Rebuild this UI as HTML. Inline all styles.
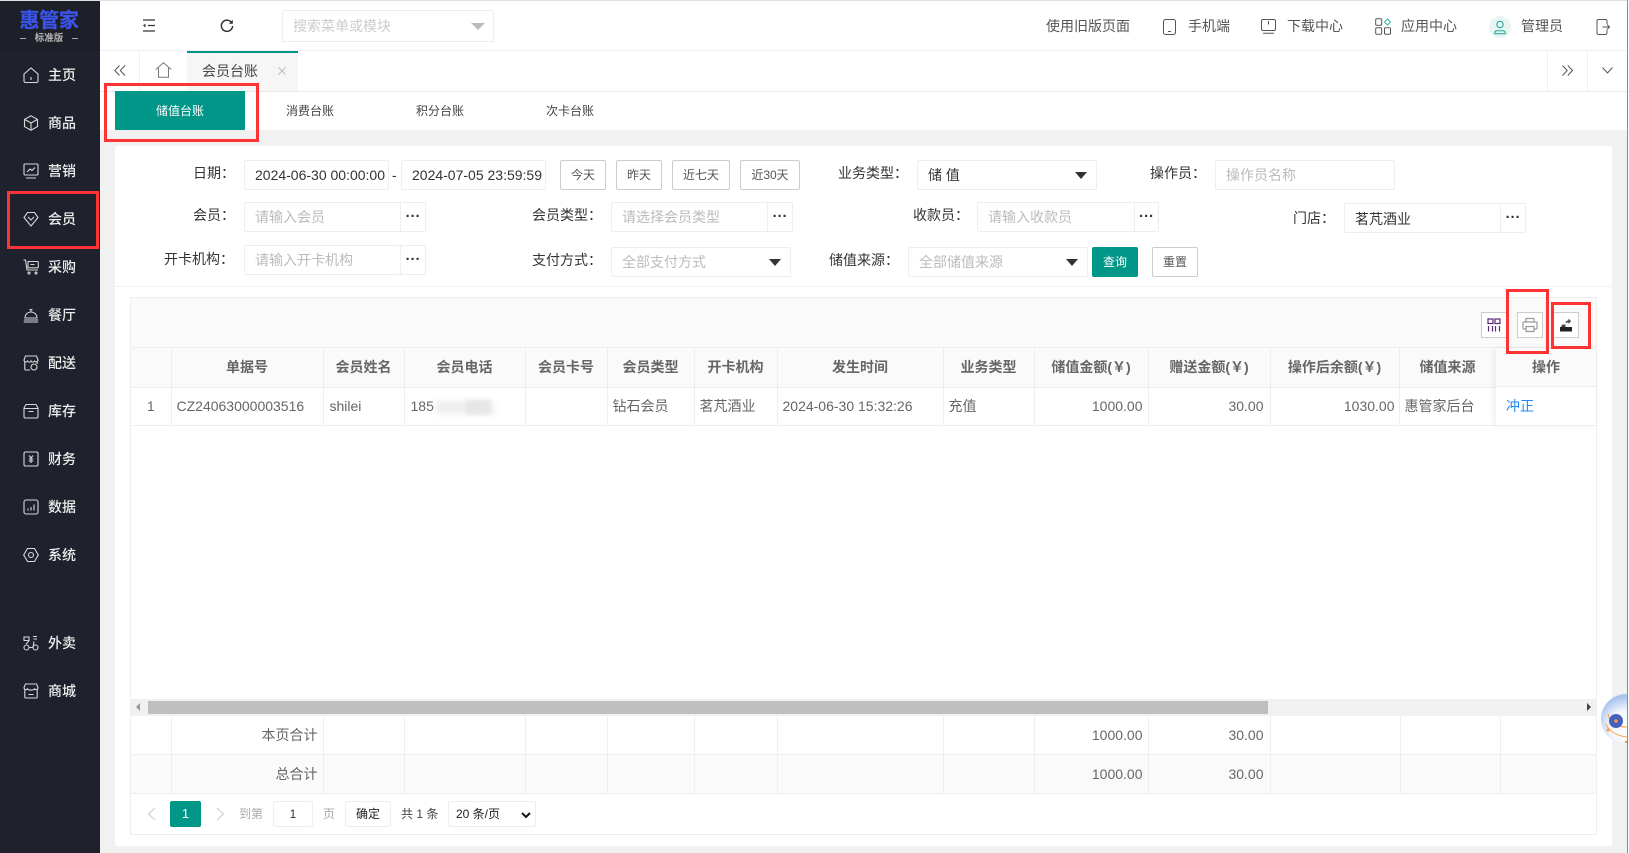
<!DOCTYPE html>
<html lang="zh-CN"><head><meta charset="utf-8"><title>会员台账</title>
<style>
*{box-sizing:border-box}
html,body{margin:0;padding:0;width:1629px;height:853px;overflow:hidden;background:#f1f1f1;font-family:"Liberation Sans","Noto Sans CJK SC",sans-serif;font-size:14px;color:#333}
.a{position:absolute}
.t{position:absolute;white-space:nowrap;line-height:30px;height:30px}
.box{position:absolute;background:#fff;border:1px solid #eee;border-radius:2px;height:30px;line-height:28px;padding-left:10px;white-space:nowrap;overflow:hidden}
.ph{color:#bbb}
.dots{position:absolute;background:#fff;border:1px solid #eee;width:26px;height:30px;text-align:center;font-size:15px;line-height:28px;font-weight:bold;color:#333;letter-spacing:0}
.btn{position:absolute;top:160px;height:30px;border:1px solid #ccc;border-radius:2px;background:#fff;text-align:center;line-height:29px;font-size:12px;color:#555}
.car{position:absolute;width:0;height:0;border-left:6px solid transparent;border-right:6px solid transparent;border-top:7px solid #333}
.lb{text-align:right}
.side{position:absolute;left:0;top:1px;width:100px;height:852px;background:#1f222c}
.m{position:absolute;left:48px;color:#ededed;font-size:14px;font-weight:500;line-height:20px;white-space:nowrap}
.i{position:absolute;left:23px;width:16px;height:16px;fill:none;stroke:#d8d8d8;stroke-width:1.1}
.hd{position:absolute;top:16px;line-height:20px;color:#555;white-space:nowrap}
.tab{position:absolute;top:91px;height:39px;line-height:41px;font-size:12px;color:#444;width:130px;text-align:center}
table{border-collapse:collapse;table-layout:fixed;position:absolute;left:131px}
td,th{border-right:1px solid #eee;border-bottom:1px solid #eee;padding:0 5px;white-space:nowrap;overflow:hidden;font-size:14px;color:#666}
th{background:#fafafa;font-weight:bold;height:39px;text-align:center}
td{height:38.5px}
.r{text-align:right}
.rb{position:absolute;border:3px solid #f33;background:transparent;z-index:20}
.tb{position:absolute;top:312px;width:26px;height:26px;border:1px solid #ccc;background:#fff}
.tb svg{position:absolute;left:4px;top:4px;width:16px;height:16px}
</style></head><body>
<div class="a" style="left:0;top:0;width:1629px;height:1px;background:#e0e0e0"></div>

<!-- sidebar -->
<div class="side"></div>
<div class="a" style="left:0;top:1px;width:100px;height:50px;background:#1e2029"></div>
<div class="t" style="left:19px;top:6px;width:60px;text-align:center;font-size:20px;font-weight:bold;color:#3b54e8;line-height:30px;letter-spacing:-.3px;-webkit-text-stroke:.3px #3b54e8">惠管家</div>
<div class="t" style="left:20px;top:24px;width:58px;text-align:center;font-size:9.5px;font-weight:bold;color:#b5b5b5;line-height:30px">标准版</div>
<div class="a" style="left:20px;top:38px;width:6px;height:1px;background:#aaa"></div>
<div class="a" style="left:72px;top:38px;width:6px;height:1px;background:#aaa"></div>

<svg class="i" style="top:67px" viewBox="0 0 16 16"><path d="M1 7L8 1l7 6v7a1.500 1.500 0 0 1-1.500 1.500h-11A1.500 1.500 0 0 1 1 14zM8 10v3"/></svg><div class="m" style="top:65px">主页</div>
<svg class="i" style="top:115px" viewBox="0 0 16 16"><path d="M8 .8l6.500 3.600v7.200L8 15.200l-6.500-3.600V4.400zM1.500 4.400L8 8l6.500-3.600M8 8v7"/></svg><div class="m" style="top:113px">商品</div>
<svg class="i" style="top:163px" viewBox="0 0 16 16"><path d="M2 1h12a1 1 0 0 1 1 1v9a1 1 0 0 1-1 1H2a1 1 0 0 1-1-1V2a1 1 0 0 1 1-1zM3 15h10M4 9l3-3 2 1.500L12 4.500"/></svg><div class="m" style="top:161px">营销</div>
<svg class="i" style="top:211px" viewBox="0 0 16 16"><path d="M4.500 1.500h7L15 6.500 8 15 1 6.500zM5 6l3 3 3-3"/></svg><div class="m" style="top:209px">会员</div>
<svg class="i" style="top:259px" viewBox="0 0 16 16"><path d="M.5 1h2l1.500 10h11M5 2.500h9.500a.8.8 0 0 1 .8.8V8a.8.8 0 0 1-.8.8H5zM7.500 5.500h4"/><circle cx="6" cy="14" r="1"/><circle cx="13" cy="14" r="1"/></svg><div class="m" style="top:257px">采购</div>
<svg class="i" style="top:307px" viewBox="0 0 16 16"><path d="M2 11a6 6 0 0 1 12 0zM8 5V3M6.500 2.500h3M.8 13h14.400M.8 15h14.400"/></svg><div class="m" style="top:305px">餐厅</div>
<svg class="i" style="top:355px" viewBox="0 0 16 16"><path d="M2.500 1h11L15 5c0 2-2.500 2.500-3.500 1-1 1.500-3 1.500-3.500 0-.5 1.500-2.500 1.500-3.500 0C3.500 7.500 1 7 1 5zM1.800 6.500V14a1 1 0 0 0 1 1H7M14.200 6.500V9"/><circle cx="11" cy="12" r="3"/></svg><div class="m" style="top:353px">配送</div>
<svg class="i" style="top:403px" viewBox="0 0 16 16"><path d="M3 1.500h10L15 5v8.500a1.500 1.500 0 0 1-1.500 1.500h-11A1.500 1.500 0 0 1 1 13.500V5zM1 5.500h14M5.500 8.500h5"/></svg><div class="m" style="top:401px">库存</div>
<svg class="i" style="top:451px" viewBox="0 0 16 16"><rect x="1" y="1" width="14" height="14" rx="1.500"/><path d="M6 4.500l2 2.500 2-2.500M8 7v5M5.800 8h4.400M5.800 10h4.400"/></svg><div class="m" style="top:449px">财务</div>
<svg class="i" style="top:499px" viewBox="0 0 16 16"><rect x="1" y="1" width="14" height="14" rx="2"/><path d="M5 11.500v-2M8 11.500v-3.500M11 11.500V5.500"/></svg><div class="m" style="top:497px">数据</div>
<svg class="i" style="top:547px" viewBox="0 0 16 16"><path d="M4.500 1.500h7L15.300 8l-3.800 6.500h-7L.7 8z"/><circle cx="8" cy="8" r="2.500"/></svg><div class="m" style="top:545px">系统</div>
<svg class="i" style="top:635px" viewBox="0 0 16 16"><circle cx="3.500" cy="12.500" r="2.500"/><circle cx="12.500" cy="12.500" r="2.500"/><path d="M1 2h5v3.500H1zM10 1.500h4M10.500 4h3.500M6 12.500h4l1-6M3 9l3-3"/></svg><div class="m" style="top:633px">外卖</div>
<svg class="i" style="top:683px" viewBox="0 0 16 16"><path d="M2.500 1h11L15 4.500c0 2-2.500 3-3.500 1.300-1 1.700-6 1.700-7 0C3.500 7.500 1 6.500 1 4.500zM1.800 6.500V14a1 1 0 0 0 1 1h10.400a1 1 0 0 0 1-1V6.500M5.500 11.500h5"/></svg><div class="m" style="top:681px">商城</div>
<div class="rb" style="left:7px;top:191px;width:92px;height:58px"></div>

<!-- header -->
<div class="a" style="left:100px;top:1px;width:1529px;height:50px;background:#fff;border-bottom:1px solid #f0f0f0"></div>
<svg class="a" style="left:142px;top:19px" width="14" height="13" fill="none" stroke="#333" stroke-width="1.300" viewBox="0 0 14 13"><path d="M1 1h12M6 6.500h7M1 12h12"/><path d="M3.500 4.500L1 6.500l2.500 2z" fill="#333" stroke="none"/></svg>
<svg class="a" style="left:220px;top:19px" width="14" height="14" fill="none" stroke="#333" stroke-width="1.500" viewBox="0 0 14 14"><path d="M12 4.200A5.600 5.600 0 1 0 12.600 7"/><path d="M12.800 .8v4h-4" stroke="none" fill="#333"/></svg>
<div class="box" style="left:282px;top:10px;width:212px;height:32px;color:#ccc;line-height:30px">搜索菜单或模块</div>
<div class="car" style="left:471px;top:23px;border-top-color:#bbb;border-left-width:7px;border-right-width:7px"></div>

<div class="hd" style="left:1046px">使用旧版页面</div>
<svg class="a" style="left:1163px;top:19px" width="13" height="16" fill="none" stroke="#555" viewBox="0 0 13 16"><rect x=".5" y=".5" width="12" height="15" rx="2"/><path d="M5 12.500h3"/></svg>
<div class="hd" style="left:1188px">手机端</div>
<svg class="a" style="left:1261px;top:19px" width="15" height="15" fill="none" stroke="#555" viewBox="0 0 15 15"><rect x=".5" y=".5" width="14" height="11" rx="1.500"/><path d="M2 14.300h11M7.500 2v3.500"/></svg>
<div class="hd" style="left:1287px">下载中心</div>
<svg class="a" style="left:1375px;top:18px" width="16" height="17" fill="none" stroke="#555" viewBox="0 0 16 17"><rect x=".7" y=".7" width="6" height="6.500" rx="1"/><rect x=".7" y="9.700" width="6" height="6.500" rx="1"/><rect x="9.500" y="9.700" width="6" height="6.500" rx="1"/><path d="M12.500 .8l3 3.200-3 3.200-3-3.200z" stroke="#35b5a5"/></svg>
<div class="hd" style="left:1401px">应用中心</div>
<div class="a" style="left:1489px;top:16px;width:22px;height:22px;border-radius:50%;background:#e8f5f3"></div>
<svg class="a" style="left:1494px;top:20px" width="12" height="15" fill="none" stroke="#12a594" viewBox="0 0 12 15"><circle cx="6" cy="4.500" r="3.200"/><path d="M.8 13.800v-1a2 2 0 0 1 2-2h6.400a2 2 0 0 1 2 2v1z"/></svg>
<div class="hd" style="left:1521px">管理员</div>
<svg class="a" style="left:1596px;top:19px" width="14" height="16" fill="none" stroke="#555" viewBox="0 0 14 16"><path d="M11 5V2a1.500 1.500 0 0 0-1.500-1.500h-7A1.500 1.500 0 0 0 1 2v12a1.500 1.500 0 0 0 1.500 1.500h7A1.500 1.500 0 0 0 11 14v-3M6.500 8h7M11 5.500L13.500 8 11 10.500"/></svg>

<!-- tab bar -->
<div class="a" style="left:100px;top:51px;width:1529px;height:41px;background:#fff;border-bottom:1px solid #e9e9e9"></div>
<div class="a" style="left:139px;top:51px;width:1px;height:40px;background:#f0f0f0"></div>
<svg class="a" style="left:114px;top:65px" width="12" height="11" fill="none" stroke="#555" viewBox="0 0 12 11"><path d="M5.500 .5L.8 5.500l4.700 5M11 .5L6.300 5.500l4.700 5"/></svg>
<svg class="a" style="left:155px;top:62px" width="17" height="16" fill="none" stroke="#777" viewBox="0 0 17 16"><path d="M.7 7.500L8.500.8l7.800 6.700M3.500 6v9.300h10V6"/></svg>
<div class="a" style="left:187px;top:51px;width:111px;height:40px;background:#f6f6f6;border-top:2px solid #009688"></div>
<div class="t" style="left:202px;top:56px;font-size:14px;color:#444">会员台账</div>
<svg class="a" style="left:278px;top:67px" width="8" height="8" stroke="#bbb" viewBox="0 0 8 8"><path d="M.5 .5l7 7M7.500 .5l-7 7"/></svg>
<div class="a" style="left:1547px;top:51px;width:1px;height:40px;background:#f0f0f0"></div>
<div class="a" style="left:1587px;top:51px;width:1px;height:40px;background:#f0f0f0"></div>
<svg class="a" style="left:1562px;top:65px" width="11" height="11" fill="none" stroke="#555" viewBox="0 0 11 11"><path d="M.5 .5l4.700 5-4.700 5M5.800 .5l4.700 5-4.700 5"/></svg>
<svg class="a" style="left:1602px;top:67px" width="11" height="7" fill="none" stroke="#555" viewBox="0 0 11 7"><path d="M.5 .5l5 5.500 5-5.500"/></svg>

<!-- sub tabs -->
<div class="a" style="left:100px;top:92px;width:1529px;height:38px;background:#fff"></div>
<div class="tab" style="left:115px;background:#009688;color:#fff">储值台账</div>
<div class="tab" style="left:245px">消费台账</div>
<div class="tab" style="left:375px">积分台账</div>
<div class="tab" style="left:505px">次卡台账</div>
<div class="rb" style="left:104px;top:83px;width:155px;height:59px"></div>

<!-- card -->
<div class="a" style="left:115px;top:146px;width:1497px;height:700px;background:#fff;border-radius:2px"></div>
<div class="a" style="left:115px;top:286px;width:1497px;height:1px;background:#f2f2f2"></div>

<!-- filters row 1 -->
<div class="t lb" style="left:160px;top:158px;width:75px">日期：</div>
<div class="box" style="left:244px;top:160px;width:145px;color:#333">2024-06-30 00:00:00</div>
<div class="t" style="left:392px;top:160px">-</div>
<div class="box" style="left:401px;top:160px;width:145px;color:#333">2024-07-05 23:59:59</div>
<div class="btn" style="left:560px;width:46px">今天</div>
<div class="btn" style="left:616px;width:46px">昨天</div>
<div class="btn" style="left:672px;width:58px">近七天</div>
<div class="btn" style="left:740px;width:60px">近30天</div>
<div class="t lb" style="left:820px;top:158px;width:88px">业务类型：</div>
<div class="box" style="left:917px;top:160px;width:180px;color:#333">储 值</div>
<div class="car" style="left:1075px;top:172px"></div>
<div class="t lb" style="left:1130px;top:158px;width:76px">操作员：</div>
<div class="box ph" style="left:1215px;top:160px;width:180px">操作员名称</div>

<!-- row 2 -->
<div class="t lb" style="left:160px;top:200px;width:75px">会员：</div>
<div class="box ph" style="left:244px;top:202px;width:157px">请输入会员</div>
<div class="dots" style="left:400px;top:202px">···</div>
<div class="t lb" style="left:500px;top:200px;width:102px">会员类型：</div>
<div class="box ph" style="left:611px;top:202px;width:157px">请选择会员类型</div>
<div class="dots" style="left:767px;top:202px">···</div>
<div class="t lb" style="left:880px;top:200px;width:89px">收款员：</div>
<div class="box ph" style="left:977px;top:202px;width:158px">请输入收款员</div>
<div class="dots" style="left:1134px;top:202px;width:25px">···</div>
<div class="t lb" style="left:1260px;top:203px;width:75px">门店：</div>
<div class="box" style="left:1344px;top:203px;width:157px;height:30px;line-height:30px;color:#333">茗芃酒业</div>
<div class="dots" style="left:1500px;top:203px;width:26px">···</div>

<!-- row 3 -->
<div class="t lb" style="left:140px;top:244px;width:94px">开卡机构：</div>
<div class="box ph" style="left:244px;top:245px;width:157px">请输入开卡机构</div>
<div class="dots" style="left:400px;top:245px">···</div>
<div class="t lb" style="left:500px;top:245px;width:102px">支付方式：</div>
<div class="box ph" style="left:611px;top:247px;width:180px">全部支付方式</div>
<div class="car" style="left:769px;top:259px"></div>
<div class="t lb" style="left:800px;top:245px;width:99px">储值来源：</div>
<div class="box ph" style="left:908px;top:247px;width:180px">全部储值来源</div>
<div class="car" style="left:1066px;top:259px"></div>
<div class="btn" style="left:1092px;top:247px;width:46px;background:#009688;border-color:#009688;color:#fff">查询</div>
<div class="btn" style="left:1152px;top:247px;width:46px">重置</div>

<!-- table card -->
<div class="a" style="left:130px;top:297px;width:1467px;height:538px;background:#fff;border:1px solid #eee"></div>
<div class="a" style="left:131px;top:298px;width:1465px;height:50px;background:#fafafa;border-bottom:1px solid #eee"></div>
<div class="tb" style="left:1481px"><svg viewBox="0 0 16 16" fill="none" stroke="#5a2a7a" stroke-width="1.200"><path d="M2 2h5v4.500H2zM9 2h5v4.500H9zM2.500 9v5.500M6.500 9v5.500M9.500 9v5.500M13.500 9v5.500"/></svg></div>
<div class="tb" style="left:1517px"><svg viewBox="0 0 16 16" fill="none" stroke="#999" stroke-width="1.200"><path d="M4 5V1.500h8V5M4 12H2a1 1 0 0 1-1-1V6a1 1 0 0 1 1-1h12a1 1 0 0 1 1 1v5a1 1 0 0 1-1 1h-2M4 9.500h8v5H4z"/></svg></div>
<div class="tb" style="left:1553px"><svg viewBox="0 0 16 16"><path d="M2 10h12v4.500H2z" fill="#222"/><path d="M3 10l1.300-2.500h3.200V10z" fill="#444"/><path d="M7.500 6.500c0-2 1-3 3-3V1.500L13 4.300 10.500 7V5.200C9 5.200 8.300 5.600 7.500 6.500z" fill="#444"/></svg></div>
<div class="rb" style="left:1506px;top:289px;width:43px;height:65px"></div>
<div class="rb" style="left:1551px;top:302px;width:40px;height:47px"></div>

<table style="top:348px;width:1465px">
<colgroup><col style="width:40px"><col style="width:152px"><col style="width:81px"><col style="width:121px"><col style="width:82px"><col style="width:87px"><col style="width:83px"><col style="width:166px"><col style="width:91px"><col style="width:114px"><col style="width:122px"><col style="width:129px"><col style="width:97px"><col style="width:100px"></colgroup>
<tr><th></th><th>单据号</th><th>会员姓名</th><th>会员电话</th><th>会员卡号</th><th>会员类型</th><th>开卡机构</th><th>发生时间</th><th>业务类型</th><th>储值金额(￥)</th><th>赠送金额(￥)</th><th>操作后余额(￥)</th><th>储值来源</th><th></th></tr>
<tr><td style="text-align:center;padding:0 5px 0 5px">1</td><td>CZ24063000003516</td><td style="padding-left:6px">shilei</td><td style="padding-left:6px">185</td><td></td><td style="padding-left:5px">钻石会员</td><td>茗芃酒业</td><td>2024-06-30 15:32:26</td><td style="padding-left:5px">充值</td><td class="r">1000.00</td><td class="r" style="padding-right:6px">30.00</td><td class="r" style="padding-right:4px">1030.00</td><td style="padding-left:5px">惠管家后台</td><td></td></tr>
</table>
<div class="a" style="left:436px;top:401px;width:58px;height:13px;background:#eee;filter:blur(3px)"></div>
<div class="a" style="left:466px;top:400px;width:24px;height:14px;background:#e6e6e6;filter:blur(2px)"></div>

<!-- fixed op column -->
<div class="a" style="left:1496px;top:348px;width:100px;height:78px;background:#fff;box-shadow:-3px 0 6px rgba(0,0,0,.06)">
<div style="height:39px;background:#fafafa;border-bottom:1px solid #eee;text-align:center;font-weight:bold;color:#666;line-height:38px">操作</div>
<div style="height:39px;border-bottom:1px solid #eee;padding-left:10px;line-height:38px;color:#1e88f5">冲正</div>
</div>

<!-- scrollbar -->
<div class="a" style="left:131px;top:699px;width:1465px;height:17px;background:#f1f1f1"></div>
<div class="a" style="left:148px;top:701px;width:1120px;height:13px;background:#bfbfbf"></div>
<div class="a" style="left:136px;top:703px;width:0;height:0;border-top:4px solid transparent;border-bottom:4px solid transparent;border-right:4px solid #999"></div>
<div class="a" style="left:1587px;top:703px;width:0;height:0;border-top:4px solid transparent;border-bottom:4px solid transparent;border-left:4px solid #444"></div>

<!-- totals -->
<table style="top:716px;width:1465px">
<colgroup><col style="width:40px"><col style="width:152px"><col style="width:81px"><col style="width:121px"><col style="width:82px"><col style="width:87px"><col style="width:83px"><col style="width:166px"><col style="width:91px"><col style="width:114px"><col style="width:122px"><col style="width:130px"><col style="width:100px"><col style="width:96px"></colgroup>
<tr><td></td><td class="r">本页合计</td><td></td><td></td><td></td><td></td><td></td><td></td><td></td><td class="r">1000.00</td><td class="r" style="padding-right:6px">30.00</td><td></td><td></td><td style="border-right:0"></td></tr>
<tr style="background:#fafafa"><td></td><td class="r">总合计</td><td></td><td></td><td></td><td></td><td></td><td></td><td></td><td class="r">1000.00</td><td class="r" style="padding-right:6px">30.00</td><td></td><td></td><td style="border-right:0"></td></tr>
</table>

<!-- pager -->
<svg class="a" style="left:147px;top:807px" width="9" height="14" fill="none" stroke="#d5d5d5" stroke-width="1.300" viewBox="0 0 9 14"><path d="M8 1L1.500 7 8 13"/></svg>
<div class="a" style="left:170px;top:801px;width:31px;height:26px;background:#009688;border-radius:2px;color:#fff;text-align:center;line-height:26px;font-size:13px">1</div>
<svg class="a" style="left:216px;top:807px" width="9" height="14" fill="none" stroke="#d5d5d5" stroke-width="1.300" viewBox="0 0 9 14"><path d="M1 1l6.500 6L1 13"/></svg>
<div class="t" style="left:239px;top:799px;font-size:12px;color:#aaa">到第</div>
<div class="box" style="left:273px;top:801px;width:40px;height:26px;line-height:24px;padding:0;text-align:center;font-size:12px;color:#333">1</div>
<div class="t" style="left:323px;top:799px;font-size:12px;color:#aaa">页</div>
<div class="box" style="left:345px;top:801px;width:46px;height:26px;line-height:25px;padding:0;text-align:center;font-size:12px;color:#222">确定</div>
<div class="t" style="left:401px;top:799px;font-size:12px;color:#444">共 1 条</div>
<div class="box" style="left:448px;top:801px;width:88px;height:26px;line-height:24px;padding-left:7px;font-size:12px;color:#222">20 条/页</div>
<svg class="a" style="left:521px;top:812px" width="10" height="7" fill="none" stroke="#111" stroke-width="2" viewBox="0 0 10 7"><path d="M1 1l4 4 4-4"/></svg>

<!-- floating ball -->
<svg class="a" style="left:1598px;top:690px" width="29" height="62" viewBox="0 0 29 62">
<defs><radialGradient id="g" cx="50%" cy="65%" r="60%"><stop offset="0" stop-color="#fff"/><stop offset=".55" stop-color="#f4f6fb"/><stop offset="1" stop-color="#a9c4ef"/></radialGradient></defs>
<circle cx="28" cy="29" r="25" fill="url(#g)"/>
<path d="M8 34c3 8 12 12 21 13M10 24c2 10 10 13 19 13" fill="none" stroke="#f7a04b" stroke-width="1"/>
<circle cx="18" cy="31" r="7" fill="#4361bd"/><circle cx="18" cy="31" r="1.800" fill="#f59b3a"/>
<circle cx="10" cy="40" r="1.500" fill="#f79a3e"/><circle cx="28" cy="52" r="1.200" fill="#f79a3e"/>
</svg>
<div class="a" style="left:1627px;top:0;width:1px;height:853px;background:#8a8a8a"></div>
<div class="a" style="left:1628px;top:0;width:1px;height:853px;background:#fff"></div>
</body></html>
